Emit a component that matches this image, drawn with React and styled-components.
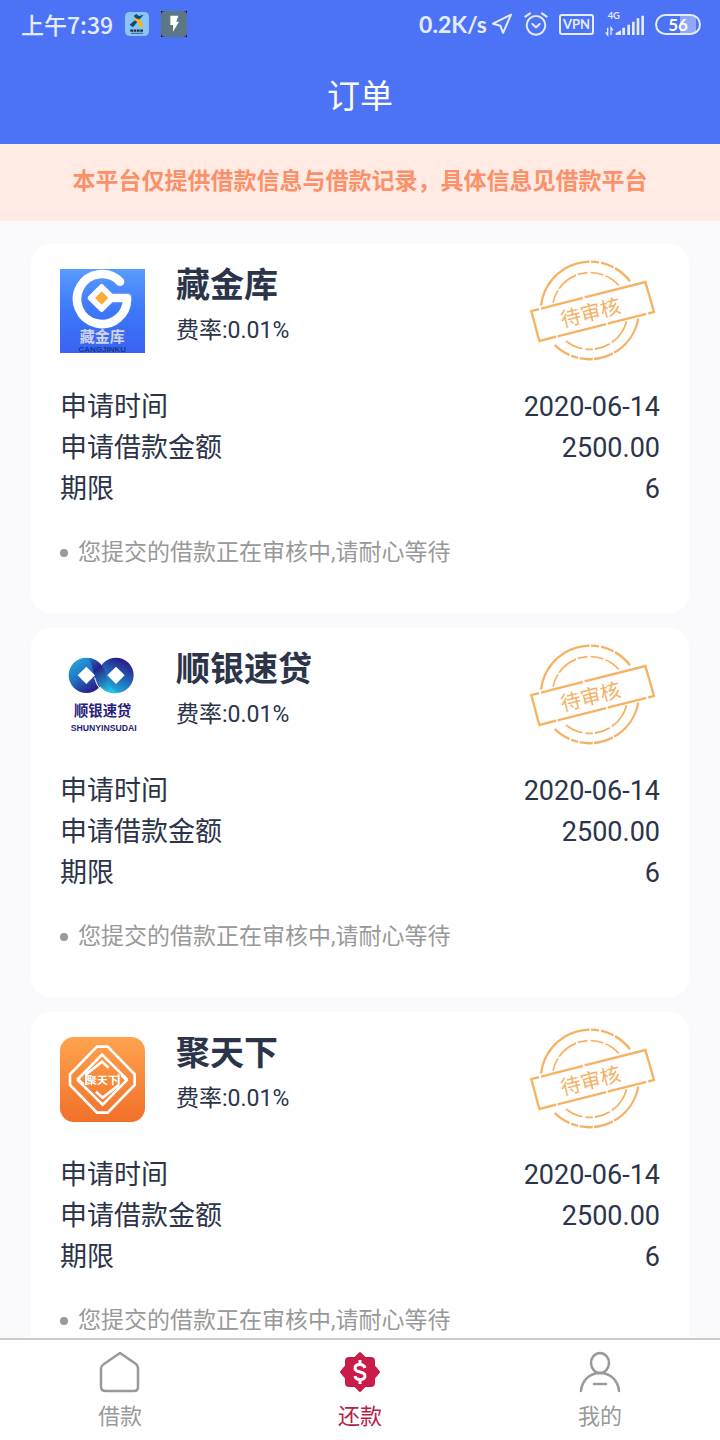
import styled, { createGlobalStyle } from 'styled-components';

const orders = [
  { id: 1, name: '藏金库', logo: 'cang', date: '2020-06-14', amount: '2500.00', term: '6' },
  { id: 2, name: '顺银速贷', logo: 'shun', date: '2020-06-14', amount: '2500.00', term: '6' },
  { id: 3, name: '聚天下', logo: 'ju', date: '2020-06-14', amount: '2500.00', term: '6' },
];

function CangLogo() {
  return (
    <Logo viewBox="0 0 255 255" role="img" aria-label="藏金库">
      <defs>
        <linearGradient id="cang" x1="0" y1="0" x2="0" y2="1">
          <stop offset="0" stopColor="#599cfc" />
          <stop offset="0.5" stopColor="#3d77fb" />
          <stop offset="1" stopColor="#3a62f3" />
        </linearGradient>
      </defs>
      <rect width="255" height="252" fill="url(#cang)" />
      <path
        d="M180 38A75 75 0 1 0 201 87H150"
        fill="none"
        stroke="#fff"
        strokeWidth="26"
        strokeLinecap="round"
        strokeLinejoin="round"
      />
      <path d="M125 52L160 87L125 122L90 87Z" fill="#fff" stroke="#fff" strokeWidth="14" strokeLinejoin="round" />
      <path d="M125 70L142 87L125 104L108 87Z" fill="#fbac35" stroke="#fbac35" strokeWidth="4" strokeLinejoin="round" />
      <LogoText x="127" y="220" size="45" fill="#cfd5e6">藏金库</LogoText>
      <LogoText x="127" y="249" size="24" fill="#13378f">CANGJINKU</LogoText>
    </Logo>
  );
}

function ShunLogo() {
  return (
    <Logo viewBox="0 0 255 255" role="img" aria-label="顺银速贷">
      <defs>
        <linearGradient id="shunLeft" x1="0" y1="0" x2="0.7" y2="1">
          <stop offset="0" stopColor="#22b5dd" />
          <stop offset="0.5" stopColor="#2273c4" />
          <stop offset="1" stopColor="#2a1283" />
        </linearGradient>
        <linearGradient id="shunRight" x1="0.7" y1="0" x2="0.2" y2="1">
          <stop offset="0" stopColor="#2a1283" />
          <stop offset="0.5" stopColor="#2368bd" />
          <stop offset="1" stopColor="#20c3e2" />
        </linearGradient>
        <linearGradient id="shunBand" x1="0" y1="0" x2="0.6" y2="1">
          <stop offset="0" stopColor="#2273c4" />
          <stop offset="0.35" stopColor="#27228d" />
          <stop offset="1" stopColor="#20c3e2" />
        </linearGradient>
      </defs>
      <circle cx="79" cy="67" r="53" fill="url(#shunLeft)" />
      <circle cx="168" cy="67" r="53" fill="url(#shunRight)" />
      <path
        d="M86 15C112 18 126 34 134 52C142 70 146 110 176 119C146 126 122 110 109 84C101 68 100 40 86 15Z"
        fill="url(#shunBand)"
      />
      <path d="M104 74C108 90 117 108 134 119L124 110C119 106 114 100 110 92Z" fill="#fff" stroke="#fff" strokeWidth="2" />
      <path d="M79 41L105 67L79 93L53 67ZM168 41L194 67L168 93L142 67Z" fill="#fff" />
      <LogoText x="128" y="188" size="43" fill="#27207d">顺银速贷</LogoText>
      <LogoText x="131" y="233" size="26" fill="#27207d">SHUNYINSUDAI</LogoText>
    </Logo>
  );
}

const juBand = 'M58 128L42 112L114 39L190 114M66 98L114 60L134 78';

function JuLogo() {
  return (
    <Logo viewBox="0 0 255 255" role="img" aria-label="聚天下">
      <defs>
        <linearGradient id="ju" x1="0" y1="0" x2="0" y2="1">
          <stop offset="0" stopColor="#fea34e" />
          <stop offset="1" stopColor="#f2702a" />
        </linearGradient>
      </defs>
      <rect width="255" height="255" rx="42" fill="url(#ju)" />
      <g transform="translate(12 14)" fill="none" stroke="#fff" strokeWidth="8">
        <path d="M99 15H131L212 98V130L131 213H99L18 130V98Z" />
        <path d={juBand} />
        <path d={juBand} transform="rotate(180 115 114)" />
        <path d="M66 98V130M164 98V130" strokeWidth="6" />
      </g>
      <LogoText x="127" y="140" size="32" fill="#fff">聚天下</LogoText>
    </Logo>
  );
}

const logos = { cang: CangLogo, shun: ShunLogo, ju: JuLogo };

function PendingStamp() {
  return (
    <Stamp viewBox="30 29 378 306" role="img" aria-label="待审核">
      <g fill="none" stroke="#f6b263" strokeWidth="7">
        <path d="M63 166A149 149 0 0 1 330 93" strokeDasharray="215 4 24 6 40 5 200" />
        <path d="M355 204A149 149 0 0 1 104 284" strokeDasharray="130 4 60 3 40 4 22 5" />
        <path d="M99 157A114 114 0 0 1 296 105" strokeWidth="5" strokeDasharray="40 6 66 5 30 9" />
        <path d="M320 212A114 114 0 0 1 138 272" strokeWidth="5" strokeDasharray="80 7 48 6 22 8" />
        <path d="M34 182L376 95L402 185L58 272Z" strokeDasharray="24 6 130 5 300 5 120 5 150 4 146 20" />
      </g>
      <StampText x="212" y="209" transform="rotate(-14 212 188)">待审核</StampText>
    </Stamp>
  );
}

function OrderCard({ order }) {
  const OrderLogo = logos[order.logo];
  return (
    <Card>
      <CardHead>
        <OrderLogo />
        <Summary>
          <Name>{order.name}</Name>
          <Rate>费率:0.01%</Rate>
        </Summary>
        <PendingStamp />
      </CardHead>
      <Details>
        <Row>
          <dt>申请时间</dt>
          <dd>{order.date}</dd>
        </Row>
        <Row>
          <dt>申请借款金额</dt>
          <dd>{order.amount}</dd>
        </Row>
        <Row>
          <dt>期限</dt>
          <dd>{order.term}</dd>
        </Row>
      </Details>
      <Tip>您提交的借款正在审核中,请耐心等待</Tip>
    </Card>
  );
}

function StatusBar() {
  return (
    <Status>
      <StatusGroup $gap={12}>
        <Clock>上午7:39</Clock>
        <svg width="24" height="24" viewBox="0 0 72 72">
          <rect width="72" height="72" rx="14" fill="#86c5f6" />
          <path d="M14 38L34 20L26 12L34 6L42 12L56 8L44 22L24 46Z" fill="#134a7c" />
          <path d="M22 22C42 14 54 28 54 46C46 48 42 42 40 34C36 28 30 26 22 22Z" fill="#f6b61f" />
          <path d="M16 56H56" stroke="#1a2c45" strokeWidth="7" strokeDasharray="8 2" />
          <path d="M18 64H54" stroke="#1a2c45" strokeWidth="2" />
        </svg>
        <svg width="26" height="26" viewBox="0 0 78 78">
          <rect width="78" height="78" fill="#0c1550" />
          <rect width="78" height="78" rx="12" fill="#5c7885" />
          <path d="M28 14H52L46 32H54L36 62V42H28Z" fill="#fff" />
        </svg>
      </StatusGroup>
      <StatusGroup $gap={11}>
        <Speed>
          0.2K/s
          <svg width="22" height="22" viewBox="0 0 66 66" fill="none" stroke="#e6ecff" strokeWidth="6" strokeLinejoin="round">
            <path d="M60 5L6 32L28 38L36 60Z" />
          </svg>
        </Speed>
        <svg width="24" height="24" viewBox="0 0 72 72" fill="none" stroke="#e6ecff" strokeWidth="6" strokeLinecap="round">
          <circle cx="36" cy="40" r="28" />
          <path d="M4 14L18 4M54 4L68 14M25 36L36 46L47 36" />
        </svg>
        <Vpn>VPN</Vpn>
        <svg width="39" height="26" viewBox="0 0 117 78" fill="#e6ecff">
          <SignalText x="8" y="24">4G</SignalText>
          <path d="M32 72V66L48 58V72ZM52 72V50H60V72ZM67 72V41H75V72ZM81 72V32H89V72ZM95 72V22H103V72ZM109 72V14H117V72Z" />
          <path d="M8 50V72L2 64M18 72V50L24 58" fill="none" stroke="#e6ecff" strokeWidth="4" />
        </svg>
        <Battery>56</Battery>
      </StatusGroup>
    </Status>
  );
}

function App() {
  return (
    <Page>
      <GlobalStyle />
      <TopBar>
        <StatusBar />
        <Title>订单</Title>
      </TopBar>
      <Notice>本平台仅提供借款信息与借款记录，具体信息见借款平台</Notice>
      <OrderList>
        {orders.map((order) => (
          <OrderCard key={order.id} order={order} />
        ))}
      </OrderList>
      <TabBar>
        <Tab href="#borrow">
          <svg width="42" height="42" viewBox="0 0 42 42" fill="none" stroke="#999" strokeWidth="2.500" strokeLinejoin="round">
            <path d="M21 2L37 13Q39 15 39 17V36Q39 40 35 40H7Q2 40 2 36V17Q2 15 5 13Z" />
          </svg>
          借款
        </Tab>
        <Tab href="#repay" $active>
          <svg width="42" height="42" viewBox="0 0 42 42">
            <path
              d="M21 2L26 7H32Q35 7 35 10V15L40 21L35 27V32Q35 35 32 35H26L21 40L16 35H10Q7 35 7 32V27L2 21L7 15V10Q7 7 10 7H16Z"
              fill="#cb1b49"
              stroke="#cb1b49"
              strokeWidth="2"
              strokeLinejoin="round"
            />
            <path
              d="M26 17Q25 13.500 21 13.500Q16 13.500 16 17Q16 20 21 21Q26 22 26 25Q26 28.500 21 28.500Q16.500 28.500 16 25M21 9V13.500M21 28.500V33"
              fill="none"
              stroke="#fff"
              strokeWidth="3"
            />
          </svg>
          还款
        </Tab>
        <Tab href="#mine">
          <svg width="42" height="42" viewBox="0 0 42 42" fill="none" stroke="#999" strokeWidth="2.500" strokeLinecap="round">
            <ellipse cx="21" cy="12" rx="9" ry="10" />
            <path d="M2 40C3 29 11 22 21 22C31 22 39 29 40 40M15 33H27" />
          </svg>
          我的
        </Tab>
      </TabBar>
    </Page>
  );
}

const GlobalStyle = createGlobalStyle`
  * {
    box-sizing: border-box;
  }
  body {
    margin: 0;
    font-family: Roboto, 'Noto Sans CJK SC', sans-serif;
    color: #2b3448;
  }
`;

const Page = styled.div`
  height: 100vh;
  display: flex;
  flex-direction: column;
  background-color: #faf9fc;
`;

const TopBar = styled.header`
  flex: none;
  background-color: #4c72f5;
`;

const Status = styled.div`
  height: 48px;
  padding: 0 19px 0 21px;
  display: flex;
  align-items: center;
  justify-content: space-between;
  color: #e6ecff;
  font-family: Lato, 'Noto Sans CJK SC', sans-serif;
  font-size: 23px;
`;

const StatusGroup = styled.div`
  display: flex;
  align-items: center;
  gap: ${({ $gap }) => $gap}px;
`;

const Clock = styled.time`
  font-family: 'Noto Sans CJK SC', sans-serif;
  font-weight: 500;
`;

const Speed = styled.span`
  display: flex;
  align-items: center;
  gap: 4px;
  font-weight: 700;
`;

const Vpn = styled.span`
  padding: 0 2px;
  border: 2px solid #e6ecff;
  border-radius: 3px;
  font-size: 13px;
  font-weight: 700;
  line-height: 17px;
`;

const SignalText = styled.text`
  font-size: 28px;
  font-weight: 700;
`;

const Battery = styled.span`
  width: 46px;
  border: 2px solid #e6ecff;
  border-radius: 11px;
  background: linear-gradient(90deg, #4c72f5 0 55%, #90a8fa 55% 92%, #4c72f5 92%);
  color: #fff;
  font-size: 17px;
  font-weight: 700;
  line-height: 17px;
  text-align: center;
`;

const Title = styled.h1`
  margin: 0;
  padding-top: 2px;
  color: #fff;
  font-size: 33px;
  font-weight: 400;
  line-height: 94px;
  text-align: center;
`;

const Notice = styled.p`
  flex: none;
  margin: 0;
  padding: 0 20px 1px;
  background-color: #ffebe4;
  color: #fb9069;
  font-size: 23px;
  font-weight: 700;
  line-height: 76px;
  text-align: center;
`;

const OrderList = styled.main`
  flex: 1;
  min-height: 0;
  padding: 23px 31px;
  display: flex;
  flex-direction: column;
  gap: 15px;
  overflow-y: auto;
  scrollbar-width: none;
`;

const Card = styled.article`
  flex: none;
  padding: 16px 29px 40px;
  border-radius: 20px;
  background-color: #fff;
`;

const CardHead = styled.div`
  min-height: 127px;
  display: flex;
  align-items: flex-start;
`;

const Logo = styled.svg`
  flex: none;
  width: 85px;
  height: 85px;
  margin-top: 9px;
`;

const LogoText = styled.text`
  font-family: 'Liberation Sans', 'Noto Sans CJK SC', sans-serif;
  font-size: ${({ size }) => size}px;
  font-weight: 700;
  text-anchor: middle;
`;

const Summary = styled.div`
  flex: 1;
  padding: 5px 0 0 31px;
`;

const Name = styled.h2`
  margin: 0;
  font-size: 34px;
  font-weight: 700;
  line-height: 40px;
`;

const Rate = styled.p`
  margin: 8px 0 0;
  font-size: 23px;
  line-height: 36px;
`;

const Stamp = styled.svg`
  flex: none;
  width: 126px;
  height: 102px;
  margin-right: 4px;
`;

const StampText = styled.text`
  fill: #f4b066;
  font-size: 61px;
  text-anchor: middle;
`;

const Details = styled.dl`
  margin: 0;
`;

const Row = styled.div`
  display: flex;
  justify-content: space-between;
  font-size: 27px;
  line-height: 41px;

  dd {
    margin: 0;
  }
`;

const Tip = styled.p`
  margin: 23px 0 0;
  display: flex;
  align-items: center;
  gap: 10px;
  color: #999;
  font-size: 23px;
  line-height: 40px;

  &::before {
    content: '';
    width: 8px;
    height: 8px;
    border-radius: 50%;
    background-color: #999;
  }
`;

const TabBar = styled.nav`
  flex: none;
  display: flex;
  border-top: 2px solid #ccc;
  background-color: #fff;
`;

const Tab = styled.a`
  flex: 1;
  padding: 11px 0 7px;
  display: flex;
  flex-direction: column;
  align-items: center;
  gap: 8px;
  color: ${({ $active }) => ($active ? '#b81c48' : '#999')};
  font-size: 22px;
  line-height: 32px;
  text-decoration: none;
`;

export default App;
